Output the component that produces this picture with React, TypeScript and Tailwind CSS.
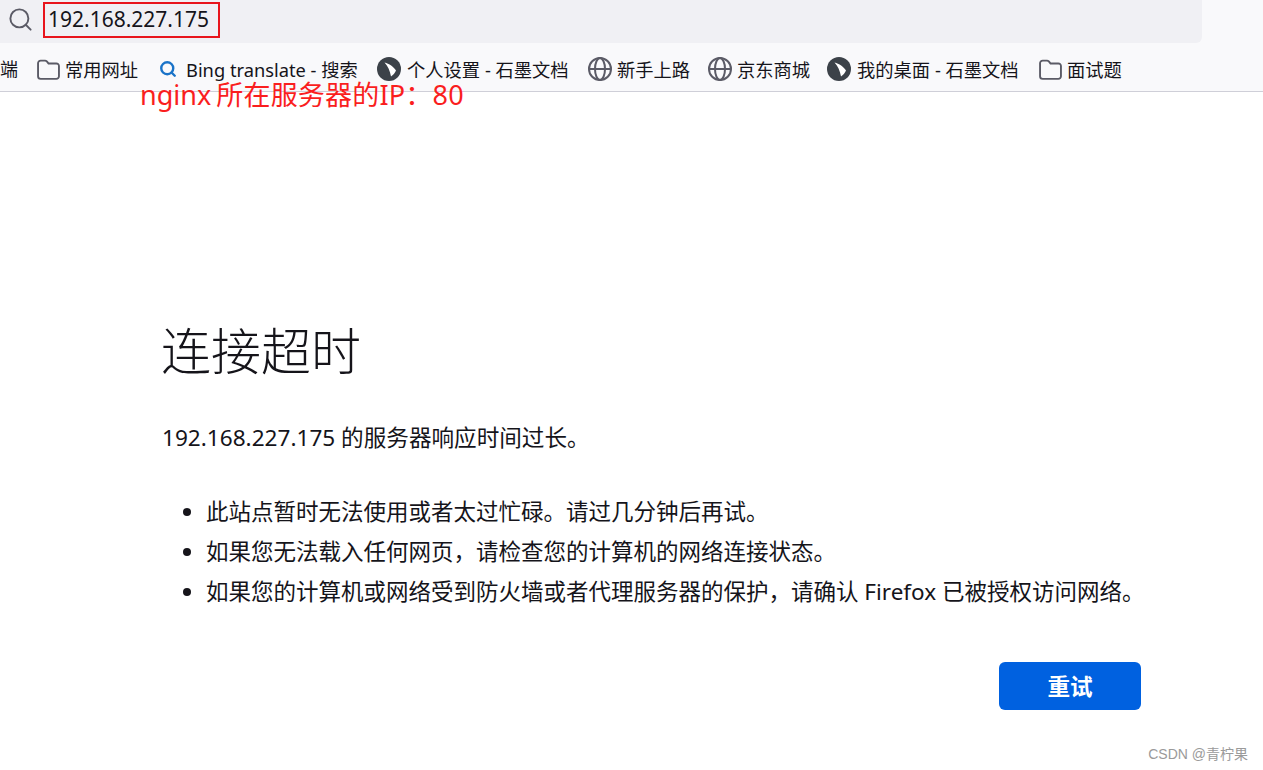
import React from "react";
import { Search } from "lucide-react";

const fontStack = { fontFamily: '"Noto Sans", "Noto Sans CJK SC", sans-serif' };

function FolderIcon({ className }: { className: string }) {
  return (
    <svg viewBox="0 0 22 20" className={className} fill="none" stroke="#5b5b66" strokeWidth="1.8">
      <path d="M1 4a2.5 2.5 0 0 1 2.5-2.5h4.2c.7 0 1.2.3 1.7.8l1.6 1.9h7.5A2.5 2.5 0 0 1 21 6.7v9.8a2.5 2.5 0 0 1-2.5 2.5h-15A2.5 2.5 0 0 1 1 16.500z" />
    </svg>
  );
}

function ShimoIcon() {
  return (
    <svg viewBox="0 0 24 24" className="w-6 h-6 shrink-0">
      <circle cx="12" cy="12" r="12" fill="#3c4249" />
      <path d="M7.500 5.500 C12 6.500 17 10 19 13.500 C18 16 16 18 14 19.500 C13 14 11 9 7.500 5.500z" fill="#ffffff" />
    </svg>
  );
}

function GlobeIcon() {
  return (
    <svg viewBox="0 0 24 24" className="w-6 h-6 shrink-0" fill="none" stroke="#5b5b66" strokeWidth="2">
      <circle cx="12" cy="12" r="11" />
      <ellipse cx="12" cy="12" rx="5" ry="11" />
      <path d="M1 12h22" />
    </svg>
  );
}

function Bookmark({ icon, label, className }: { icon: React.ReactNode; label: string; className: string }) {
  return (
    <div className={`flex items-center shrink-0 ${className}`}>
      {icon}
      <span className="text-[18.300px] leading-none text-[#15141a] whitespace-nowrap translate-y-[1px]">{label}</span>
    </div>
  );
}

export default function App() {
  const globe = <GlobeIcon />;
  const folder = <FolderIcon className="w-[23px] h-[21px] shrink-0" />;

  return (
    <div className="relative w-[1263px] h-[770px] overflow-hidden bg-white" style={fontStack}>
      {/* browser toolbar */}
      <div className="h-[92px] bg-[#f9f9fb] border-b border-[#cfcfd8]">
        <div className="w-[1202px] h-[43px] bg-[#f0f0f4] rounded-br-[6px] flex items-center pl-[7px]">
          <Search className="w-[27px] h-[27px] -translate-y-[2px] text-[#5b5b66]" strokeWidth={1.7} />
          <span className="ml-[14px] text-[21px] leading-none text-[#15141a] -translate-y-[2px]">192.168.227.175</span>
        </div>
        <div className="h-[48px] flex items-center translate-y-[2px]">
          <span className="text-[18px] leading-none text-[#15141a] w-[37px] shrink-0">端</span>
          <Bookmark icon={folder} label="常用网址" className="w-[122px] gap-[5px]" />
          <Bookmark
            icon={<Search className="w-[18px] h-[18px] shrink-0 text-[#1a73c8]" strokeWidth={3.200} />}
            label="Bing translate - 搜索"
            className="w-[218px] gap-[9px]"
          />
          <Bookmark icon={<ShimoIcon />} label="个人设置 - 石墨文档" className="w-[211px] gap-[6px]" />
          <Bookmark icon={globe} label="新手上路" className="w-[120px] gap-[5px]" />
          <Bookmark icon={globe} label="京东商城" className="w-[119px] gap-[5px]" />
          <Bookmark icon={<ShimoIcon />} label="我的桌面 - 石墨文档" className="w-[212px] gap-[6px]" />
          <Bookmark icon={folder} label="面试题" className="gap-[5px]" />
        </div>
      </div>

      {/* annotations on top of the screenshot */}
      <div className="absolute left-[43px] top-[2px] w-[177px] h-[36px] border-2 border-[#e8141c]" />
      <div className="absolute left-[140px] top-[80px] flex text-[27px] leading-[30px] text-[#fa1e1e] whitespace-nowrap">
        <span>nginx</span>
        <span className="ml-[5px] tracking-[0.2px]">所在服务器的IP：80</span>
      </div>

      {/* error page */}
      <div className="pl-[161px] pr-[122px] text-[#15141a]">
        <h1 className="mt-[224px] text-[50px] leading-[70px] font-light">连接超时</h1>
        <p className="mt-[34px] ml-[1px] text-[22.600px] leading-[36px]">192.168.227.175 的服务器响应时间过长。</p>
        <ul className="mt-[36px] ml-[45px] list-disc text-[22.500px] leading-[40px]">
          <li>此站点暂时无法使用或者太过忙碌。请过几分钟后再试。</li>
          <li>如果您无法载入任何网页，请检查您的计算机的网络连接状态。</li>
          <li className="whitespace-nowrap">如果您的计算机或网络受到防火墙或者代理服务器的保护，请确认 Firefox 已被授权访问网络。</li>
        </ul>
        <div className="mt-[50px] flex justify-end">
          <button className="w-[142px] h-[48px] rounded-[6px] bg-[#0061e0] text-white text-[22.600px] font-bold leading-none">
            <span className="inline-block translate-y-[1px]">重试</span>
          </button>
        </div>
      </div>

      <div className="absolute right-[15px] top-[745px] text-[14px] leading-[18px] text-[#9a9a9a]" style={{ fontFamily: '"Liberation Sans", "Noto Sans CJK SC", sans-serif' }}>
        CSDN @青柠果
      </div>
    </div>
  );
}
